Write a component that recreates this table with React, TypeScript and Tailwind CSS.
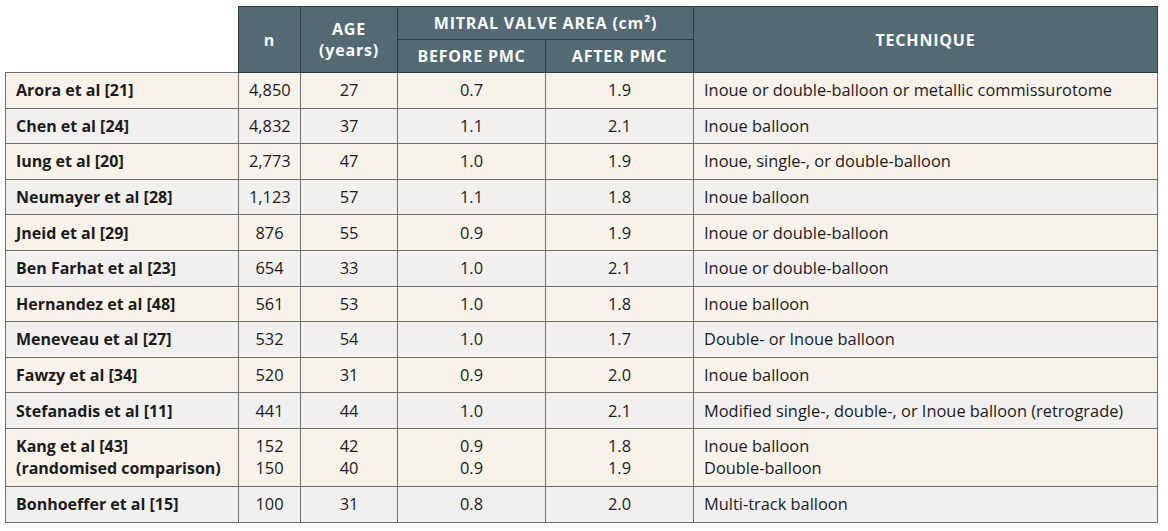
const rows = [
  { name: ["Arora et al [21]"], n: ["4,850"], age: ["27"], before: ["0.7"], after: ["1.9"], tech: ["Inoue or double-balloon or metallic commissurotome"] },
  { name: ["Chen et al [24]"], n: ["4,832"], age: ["37"], before: ["1.1"], after: ["2.1"], tech: ["Inoue balloon"] },
  { name: ["Iung et al [20]"], n: ["2,773"], age: ["47"], before: ["1.0"], after: ["1.9"], tech: ["Inoue, single-, or double-balloon"] },
  { name: ["Neumayer et al [28]"], n: ["1,123"], age: ["57"], before: ["1.1"], after: ["1.8"], tech: ["Inoue balloon"] },
  { name: ["Jneid et al [29]"], n: ["876"], age: ["55"], before: ["0.9"], after: ["1.9"], tech: ["Inoue or double-balloon"] },
  { name: ["Ben Farhat et al [23]"], n: ["654"], age: ["33"], before: ["1.0"], after: ["2.1"], tech: ["Inoue or double-balloon"] },
  { name: ["Hernandez et al [48]"], n: ["561"], age: ["53"], before: ["1.0"], after: ["1.8"], tech: ["Inoue balloon"] },
  { name: ["Meneveau et al [27]"], n: ["532"], age: ["54"], before: ["1.0"], after: ["1.7"], tech: ["Double- or Inoue balloon"] },
  { name: ["Fawzy et al [34]"], n: ["520"], age: ["31"], before: ["0.9"], after: ["2.0"], tech: ["Inoue balloon"] },
  { name: ["Stefanadis et al [11]"], n: ["441"], age: ["44"], before: ["1.0"], after: ["2.1"], tech: ["Modified single-, double-, or Inoue balloon (retrograde)"] },
  { name: ["Kang et al [43]", "(randomised comparison)"], n: ["152", "150"], age: ["42", "40"], before: ["0.9", "0.9"], after: ["1.8", "1.9"], tech: ["Inoue balloon", "Double-balloon"] },
  { name: ["Bonhoeffer et al [15]"], n: ["100"], age: ["31"], before: ["0.8"], after: ["2.0"], tech: ["Multi-track balloon"] },
];

function Lines({ items }: { items: string[] }) {
  return (
    <>
      {items.map((t, i) => (
        <div key={i} className="leading-[22px]">
          {t}
        </div>
      ))}
    </>
  );
}

export default function App() {
  const head = "border border-[#2f3c41] bg-[#536a73] text-[#fbfbfb] text-[16px] font-bold tracking-[0.05em] text-center align-middle";
  const cell = "border border-[#6e6e6e] align-middle px-[10px]";
  return (
    <div className="w-[1168px] h-[531px] bg-white pl-[5px] pt-[6px]" style={{ fontFamily: "'Open Sans', 'Liberation Sans', sans-serif" }}>
      <table className="border-collapse table-fixed w-[1152px] text-[16.4px] text-[#1c1c1c]">
        <colgroup>
          <col className="w-[233px]" />
          <col className="w-[62px]" />
          <col className="w-[97px]" />
          <col className="w-[148px]" />
          <col className="w-[148px]" />
          <col className="w-[464px]" />
        </colgroup>
        <thead>
          <tr className="h-[33px]">
            <th rowSpan={2} className="bg-white" />
            <th rowSpan={2} className={head}>n</th>
            <th rowSpan={2} className={`${head} leading-[21px]`}>
              AGE
              <br />
              (years)
            </th>
            <th colSpan={2} className={head}>MITRAL VALVE AREA (cm²)</th>
            <th rowSpan={2} className={head}>TECHNIQUE</th>
          </tr>
          <tr className="h-[33px]">
            <th className={head}>BEFORE PMC</th>
            <th className={head}>AFTER PMC</th>
          </tr>
        </thead>
        <tbody>
          {rows.map((r, i) => (
            <tr key={i} className={`${r.name.length > 1 ? "h-[58px]" : "h-[35.6px]"} ${i % 2 === 0 ? "bg-[#f7f2ea]" : "bg-[#f1f0ef]"}`}>
              <td className={`${cell} font-bold text-[16px]`}>
                <Lines items={r.name} />
              </td>
              <td className={`${cell} text-center`}>
                <Lines items={r.n} />
              </td>
              <td className={`${cell} text-center`}>
                <Lines items={r.age} />
              </td>
              <td className={`${cell} text-center`}>
                <Lines items={r.before} />
              </td>
              <td className={`${cell} text-center`}>
                <Lines items={r.after} />
              </td>
              <td className={cell}>
                <Lines items={r.tech} />
              </td>
            </tr>
          ))}
        </tbody>
      </table>
    </div>
  );
}
